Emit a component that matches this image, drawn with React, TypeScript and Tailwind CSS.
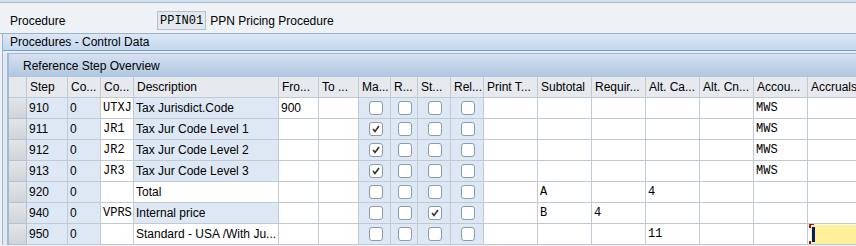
import React from "react";

type Col = { key: string; label: string; w: string; box?: boolean };

const cols: Col[] = [
  { key: "step", label: "Step", w: "w-[41px]" },
  { key: "cntr", label: "Co...", w: "w-[33px]" },
  { key: "ctyp", label: "Co...", w: "w-[33px]" },
  { key: "desc", label: "Description", w: "w-[145px]" },
  { key: "from", label: "Fro...", w: "w-[40px]" },
  { key: "to", label: "To ...", w: "w-[40px]" },
  { key: "man", label: "Ma...", w: "w-[32px]", box: true },
  { key: "req", label: "R...", w: "w-[27px]", box: true },
  { key: "stat", label: "St...", w: "w-[33px]", box: true },
  { key: "rel", label: "Rel...", w: "w-[33px]", box: true },
  { key: "print", label: "Print T...", w: "w-[54px]" },
  { key: "sub", label: "Subtotal", w: "w-[54px]" },
  { key: "reqt", label: "Requir...", w: "w-[54px]" },
  { key: "altca", label: "Alt. Ca...", w: "w-[54px]" },
  { key: "altcn", label: "Alt. Cn...", w: "w-[54px]" },
  { key: "acct", label: "Accou...", w: "w-[54px]" },
  { key: "accr", label: "Accruals", w: "w-[60px]" },
];

type Row = {
  step: string;
  ctyp: string;
  desc: string;
  descEdit: boolean;
  from?: string;
  checks: [boolean, boolean, boolean, boolean];
  sub?: string;
  reqt?: string;
  altca?: string;
  acct?: string;
  focus?: boolean;
};

const rows: Row[] = [
  { step: "910", ctyp: "UTXJ", desc: "Tax Jurisdict.Code", descEdit: false, from: "900", checks: [false, false, false, false], acct: "MWS" },
  { step: "911", ctyp: "JR1", desc: "Tax Jur Code Level 1", descEdit: false, checks: [true, false, false, false], acct: "MWS" },
  { step: "912", ctyp: "JR2", desc: "Tax Jur Code Level 2", descEdit: false, checks: [true, false, false, false], acct: "MWS" },
  { step: "913", ctyp: "JR3", desc: "Tax Jur Code Level 3", descEdit: false, checks: [true, false, false, false], acct: "MWS" },
  { step: "920", ctyp: "", desc: "Total", descEdit: true, checks: [false, false, false, false], sub: "A", altca: "4" },
  { step: "940", ctyp: "VPRS", desc: "Internal price", descEdit: false, checks: [false, false, true, false], sub: "B", reqt: "4" },
  { step: "950", ctyp: "", desc: "Standard - USA /With Ju...", descEdit: true, checks: [false, false, false, false], altca: "11", focus: true },
];

const sans = "font-['Liberation_Sans',Arial,sans-serif] text-[12px] text-[#000]";
const mono = "font-['Liberation_Mono','Courier_New',monospace] text-[12px]";

function Check({ on }: { on: boolean }) {
  return (
    <div className="flex h-[14px] w-[14px] items-center justify-center rounded-[3px] border border-[#8d9aa8] bg-white">
      {on && (
        <svg width="10" height="10" viewBox="0 0 10 10">
          <path d="M2 5 L4 7.5 L8 2" fill="none" stroke="#333" strokeWidth="1.6" />
        </svg>
      )}
    </div>
  );
}

function Cell({ w, bg, children, className = "" }: { w: string; bg: string; children?: React.ReactNode; className?: string }) {
  return (
    <div className={`${w} ${bg} ${className} flex h-[21px] shrink-0 items-center overflow-hidden whitespace-nowrap border-r border-b border-[#c0cad5] pl-[2px]`}>
      {children}
    </div>
  );
}

export default function App() {
  return (
    <div className={`h-[246px] w-[856px] overflow-hidden bg-[#eef2f7] ${sans}`}>
      <div className="h-[2px] bg-[#d4e0ee]" />
      <div className="h-[1px] bg-[#a9b8cb]" />
      <div className="flex h-[30px] items-end pb-[3px] pl-[10px]">
        <span className="w-[147px]">Procedure</span>
        <span className={`flex h-[19px] items-center border border-[#b7c1cc] bg-[#e3e8ee] px-[2px] ${mono}`}>PPIN01</span>
        <span className="ml-[4px]">PPN Pricing Procedure</span>
      </div>
      <div className="h-[1px] bg-[#9db0c9]" />
      <div className="ml-[2px] border-l border-[#9fb3cc] bg-[#dfe8f3]">
        <div className="flex h-[17px] items-center border-b border-[#7f9ec6] bg-[linear-gradient(#dbe7f5,#c2d7ef)] pl-[7px]">
          Procedures - Control Data
        </div>
        <div className="h-[2px] bg-[#e6eef8]" />
        <div className="ml-[4px] border-l-2 border-t border-[#a6b9d0] bg-white">
          <div className="flex h-[23px] items-center bg-[linear-gradient(#d5e2f1,#afc5df)] pl-[14px]">
            Reference Step Overview
          </div>
          <div className="flex">
            <div className="h-[21px] w-[18px] shrink-0 border-r border-b border-[#c0cad5] bg-[#e4e7eb]" />
            {cols.map((c) => (
              <Cell key={c.key} w={c.w} bg="bg-[#e6e9ed]" className="pl-[3px]">
                {c.label}
              </Cell>
            ))}
          </div>
          {rows.map((r) => (
            <div key={r.step} className="flex">
              <div className="h-[21px] w-[18px] shrink-0 border-r border-b border-[#b8c0c9] bg-[linear-gradient(#e2e5e9,#cfd4da)]" />
              <Cell w="w-[41px]" bg="bg-[#dde8f4]">{r.step}</Cell>
              <Cell w="w-[33px]" bg="bg-[#dde8f4]">0</Cell>
              <Cell w="w-[33px]" bg="bg-white" className={mono}>{r.ctyp}</Cell>
              <Cell w="w-[145px]" bg={r.descEdit ? "bg-white" : "bg-[#dde8f4]"}>{r.desc}</Cell>
              <Cell w="w-[40px]" bg="bg-white">{r.from}</Cell>
              <Cell w="w-[40px]" bg="bg-white" />
              {r.checks.map((on, i) => (
                <Cell key={i} w={cols[6 + i].w} bg="bg-[#dde8f4]" className="justify-center pl-0">
                  <Check on={on} />
                </Cell>
              ))}
              <Cell w="w-[54px]" bg="bg-white" />
              <Cell w="w-[54px]" bg="bg-white" className={mono}>{r.sub}</Cell>
              <Cell w="w-[54px]" bg="bg-white" className={mono}>{r.reqt}</Cell>
              <Cell w="w-[54px]" bg="bg-white" className={mono}>{r.altca}</Cell>
              <Cell w="w-[54px]" bg="bg-white" />
              <Cell w="w-[54px]" bg="bg-white" className={mono}>{r.acct}</Cell>
              <Cell w="w-[60px]" bg="bg-white" className="relative pl-0">
                {r.focus && (
                  <div className="relative ml-[1px] flex h-[19px] w-full items-center bg-[#fff19a]">
                    <div className="ml-[1px] h-[15px] w-[3px] bg-[#0a1a6b]" />
                    <div className="absolute left-[-2px] top-[-2px] h-[5px] w-[5px] border-l-2 border-t-2 border-[#a0141e]" />
                    <div className="absolute bottom-[-2px] left-[-2px] h-[5px] w-[5px] border-b-2 border-l-2 border-[#a0141e]" />
                  </div>
                )}
              </Cell>
            </div>
          ))}
        </div>
      </div>
    </div>
  );
}
